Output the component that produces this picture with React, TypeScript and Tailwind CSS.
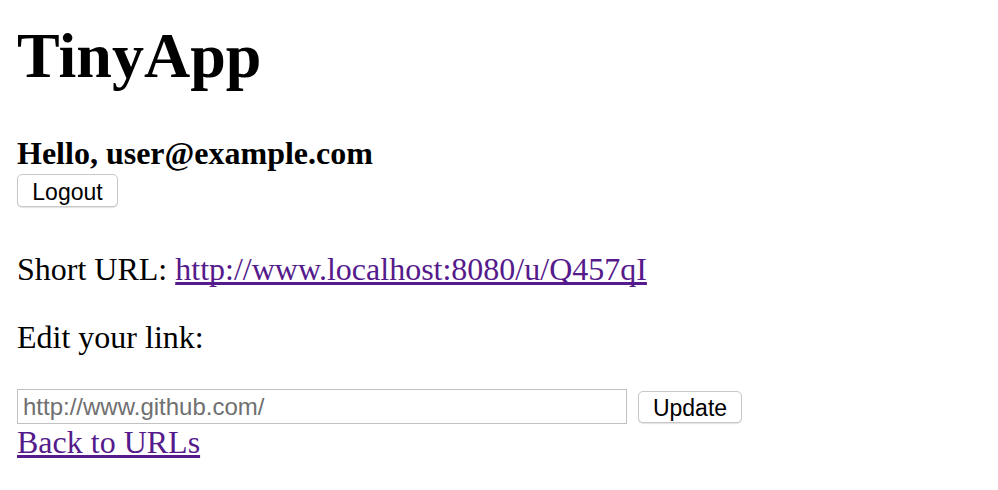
export default function App() {
  return (
    <div className="min-h-screen bg-white px-[17px] font-['Liberation_Serif',serif] text-black">
      {/* Header */}
      <h1 className="mt-[20px] text-[64px] font-bold leading-[72px]">TinyApp</h1>

      <h3 className="mt-[43px] text-[32px] font-bold leading-[36px]">Hello, user@example.com</h3>
      <form className="mt-[3px]" onSubmit={(e) => e.preventDefault()}>
        <button
          type="submit"
          className="flex h-[33px] w-[101px] items-center justify-center rounded-[5px] border border-[#c8c8c8] bg-white pt-[3px] font-['Liberation_Sans',sans-serif] text-[23px] leading-none text-black shadow-[0_1px_1px_rgba(0,0,0,0.12)]"
        >
          Logout
        </button>
      </form>

      {/* Link details */}
      <p className="mt-[44px] text-[32px] leading-[36px]">
        Short URL:{' '}
        <a href="#" className="text-[#551a8b] underline [text-decoration-skip-ink:none]">
          http://www.localhost:8080/u/Q457qI
        </a>
      </p>
      <p className="mt-[32px] text-[32px] leading-[36px]">Edit your link:</p>

      <form className="mt-[34px] flex items-center gap-[11px]" onSubmit={(e) => e.preventDefault()}>
        <input
          type="text"
          placeholder="http://www.github.com/"
          className="h-[35px] w-[610px] border border-[#c2c2c2] bg-white px-[5px] pt-[1px] font-['Liberation_Sans',sans-serif] text-[24px] text-black outline-none placeholder:text-[#707070]"
        />
        <button
          type="submit"
          className="flex h-[32px] w-[104px] items-center justify-center rounded-[5px] border border-[#c8c8c8] bg-white pt-[3px] font-['Liberation_Sans',sans-serif] text-[23px] leading-none text-black shadow-[0_1px_1px_rgba(0,0,0,0.12)]"
        >
          Update
        </button>
      </form>

      <a href="#" className="block w-fit text-[32px] leading-[36px] text-[#551a8b] underline [text-decoration-skip-ink:none]">
        Back to URLs
      </a>
    </div>
  );
}
